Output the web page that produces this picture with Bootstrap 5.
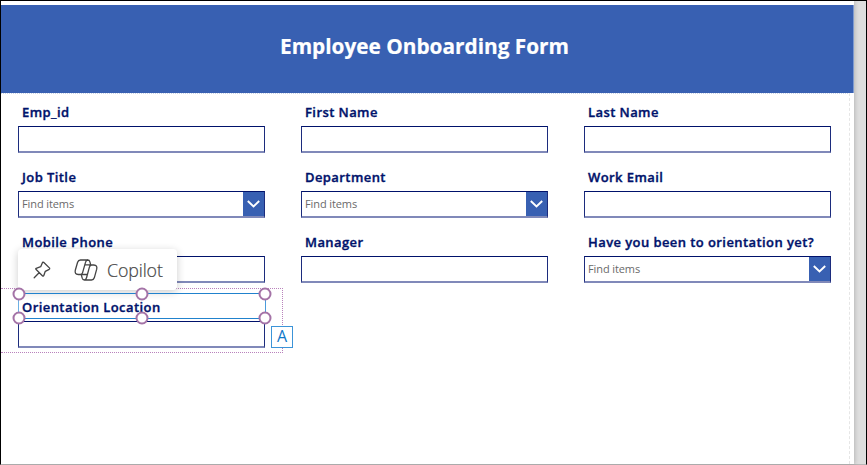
<!DOCTYPE html>
<html lang="en">
<head>
<meta charset="utf-8">
<meta name="viewport" content="width=device-width, initial-scale=1">
<title>Employee Onboarding Form</title>
<link href="https://cdn.jsdelivr.net/npm/bootstrap@5.3.0/dist/css/bootstrap.min.css" rel="stylesheet">
<style>
  body { font-family: "Open Sans", sans-serif; color: #00126b; height: 465px; overflow: hidden; }
  .studio { height: 465px; border: 1px solid #000; border-bottom-color: #b8b8b8; background: #dedede; }
  .screen { width: 853px; background: #fff; box-shadow: 1px 0 4px rgba(0,0,0,.18); padding-top: 4px; }
  .title-bar { height: 88px; background: #3860b2; border-right: 1px solid #7f9bd0; }
  .title-bar h1 { font-size: 20.8px; line-height: 28px; margin: 0 0 7px -5px; -webkit-text-stroke: .2px #fff; }
  .form-area { width: 849px; height: 371px; border-right: 1px dashed #e6e6e6; border-top: 1px dotted #c9d4e8; padding: 7px 0 0 17px; }
  .form-cols { display: grid; grid-template-columns: repeat(3, 247px); column-gap: 36px; grid-auto-rows: 65px; }
  .field-label { display: block; font-size: 13px; line-height: 22px; height: 25px; font-weight: 600; letter-spacing: .42px; padding-left: 4px; white-space: nowrap; -webkit-text-stroke: .35px #00126b; }
  .field-box { height: 27px; border: 1px solid #1c2c7d; border-top-color: #00126b; border-bottom: 2px solid #8089b9; background: #fff; }
  .find-text { font-size: 11px; line-height: 24px; color: #6a6a6a; padding-left: 3px; letter-spacing: -.1px; }
  .drop-btn { width: 21px; background: #3860b2; }
  .group-outline { left: 0; top: 287px; width: 282px; height: 65px; border: 1px dotted #b982bc; border-left: 0; }
  .sel-box { left: 17px; top: 292px; width: 248px; height: 26px; border: 1px solid #2182cd; border-left-color: #6db0e4; border-right-color: #4a9bdb; }
  .grip { width: 13px; height: 13px; border: 2px solid #a473a7; border-radius: 50%; background: #fff; transform: translate(-50%, -50%); }
  .g-top { top: 0; } .g-bottom { top: 24px; }
  .g-left { left: 0; } .g-mid { left: 123px; } .g-right { left: 246px; }
  .tag-a { left: 270px; top: 325px; width: 22px; height: 22px; border: 1px solid #3c94d8; background: #fff; color: #0f78c8; font-size: 16px; line-height: 19px; }
  .float-bar { left: 17px; top: 248px; width: 159px; height: 41px; background: #fff; border-radius: 4px; box-shadow: 0 2px 8px rgba(0,0,0,.2); padding-left: 14px; }
  .float-bar svg { flex: none; fill: none; stroke: #444; stroke-width: 1.3; stroke-linejoin: round; stroke-linecap: round; }
  .copilot-icon { margin-left: 22px; margin-right: 9px; }
  .copilot-text { font-weight: 300; font-size: 17.8px; letter-spacing: -.1px; line-height: 24px; color: #444; -webkit-text-stroke: .2px #444; }
</style>
</head>
<body>
<div class="studio position-relative">
  <main class="screen">
    <header class="title-bar d-flex align-items-center justify-content-center text-white">
      <h1 class="fw-bold">Employee Onboarding Form</h1>
    </header>
    <form class="form-area">
      <div class="form-cols">
        <div><label class="field-label">Emp_id</label><div class="field-box"></div></div>
        <div><label class="field-label">First Name</label><div class="field-box"></div></div>
        <div><label class="field-label">Last Name</label><div class="field-box"></div></div>
        <div><label class="field-label">Job Title</label>
          <div class="field-box d-flex justify-content-between"><span class="find-text">Find items</span><span class="drop-btn d-flex align-items-center justify-content-center"><svg width="13" height="8" viewBox="0 0 13 8" fill="none" stroke="#fff" stroke-width="1.9"><path d="M.8 1 6.5 6.5 12.2 1"/></svg></span></div></div>
        <div><label class="field-label">Department</label>
          <div class="field-box d-flex justify-content-between"><span class="find-text">Find items</span><span class="drop-btn d-flex align-items-center justify-content-center"><svg width="13" height="8" viewBox="0 0 13 8" fill="none" stroke="#fff" stroke-width="1.9"><path d="M.8 1 6.5 6.5 12.2 1"/></svg></span></div></div>
        <div><label class="field-label">Work Email</label><div class="field-box"></div></div>
        <div><label class="field-label">Mobile Phone</label><div class="field-box"></div></div>
        <div><label class="field-label">Manager</label><div class="field-box"></div></div>
        <div><label class="field-label">Have you been to orientation yet?</label>
          <div class="field-box d-flex justify-content-between"><span class="find-text">Find items</span><span class="drop-btn d-flex align-items-center justify-content-center"><svg width="13" height="8" viewBox="0 0 13 8" fill="none" stroke="#fff" stroke-width="1.9"><path d="M.8 1 6.5 6.5 12.2 1"/></svg></span></div></div>
        <div><label class="field-label">Orientation Location</label><div class="field-box"></div></div>
      </div>
    </form>
  </main>

  <div class="group-outline position-absolute"></div>
  <div class="float-bar position-absolute d-flex align-items-center">
    <svg width="20" height="20" viewBox="0 0 20 20"><path d="M11.6 2.2 17.6 8.1Q18 8.8 17.2 9.3L13.3 11.3 11.7 15.8Q11.3 16.5 10.6 16L3.9 9.3Q3.5 8.6 4.2 8.3L8.7 6.7 10.5 2.6Q10.9 1.8 11.6 2.2ZM7.1 12.8 2.2 17.7"/></svg>
    <svg class="copilot-icon" width="24" height="22" viewBox="0 0 24 22"><path d="M8.8 15.5H4.2Q.4 15.4 1.3 11.2L3.6 3.2Q4.3 1 6.5 1H13.6Q15.4 1 15.9 2.8L16.7 5.8M6.4 15.5Q8 15.5 8.6 13.6L11.5 3.4Q12.1 1 13.7 1M15.2 6H19.8Q23.6 6.2 22.7 10.2L20.3 18.8Q19.6 21 17.5 21H10.4Q8.7 21 8.2 19.2L7.3 15.6M17.6 6Q16 6 15.4 8.1L12.6 18.5Q12 21 10.4 21M11.1 5.8H15.5M8.4 15.5H13"/></svg>
    <span class="copilot-text">Copilot</span>
  </div>
  <div class="sel-box position-absolute">
    <span class="grip position-absolute g-top g-left"></span><span class="grip position-absolute g-top g-mid"></span><span class="grip position-absolute g-top g-right"></span>
    <span class="grip position-absolute g-bottom g-left"></span><span class="grip position-absolute g-bottom g-mid"></span><span class="grip position-absolute g-bottom g-right"></span>
  </div>
  <div class="tag-a position-absolute text-center">A</div>
</div>
<script src="https://cdn.jsdelivr.net/npm/bootstrap@5.3.0/dist/js/bootstrap.bundle.min.js"></script>
</body>
</html>
